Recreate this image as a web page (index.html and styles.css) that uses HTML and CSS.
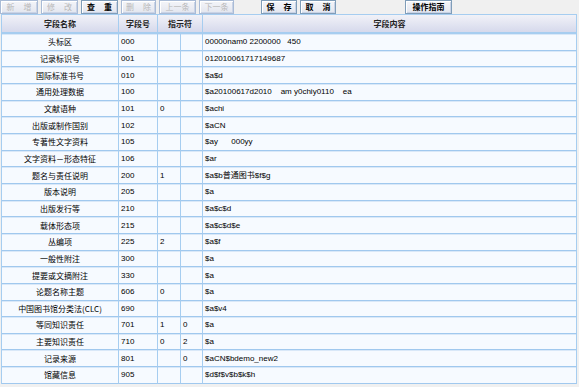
FILE: index.html
```
<!DOCTYPE html>
<html>
<head>
<meta charset="utf-8">
<link rel="stylesheet" href="styles.css">
</head>
<body>
<div class="toolbar">
  <div class="group">
    <button class="btn off sp w38">新 增</button>
    <button class="btn off sp w37">修 改</button>
    <button class="btn on sp w37">查 重</button>
    <button class="btn off sp w35">删 除</button>
    <button class="btn off w37">上一条</button>
    <button class="btn off w35">下一条</button>
  </div>
  <div class="group g2">
    <button class="btn on sp w36">保 存</button>
    <button class="btn on sp w36">取 消</button>
  </div>
  <div class="group g3">
    <button class="btn on w47">操作指南</button>
  </div>
</div>
<table class="grid">
  <colgroup>
    <col class="c1"><col class="c2"><col class="c3"><col class="c4"><col>
  </colgroup>
  <thead>
    <tr><th>字段名称</th><th>字段号</th><th colspan="2">指示符</th><th>字段内容</th></tr>
  </thead>
  <tbody>
    <tr><td class="name">头标区</td><td>000</td><td></td><td></td><td>00000nam0 2200000   450</td></tr>
    <tr><td class="name">记录标识号</td><td>001</td><td></td><td></td><td>012010061717149687</td></tr>
    <tr><td class="name">国际标准书号</td><td>010</td><td></td><td></td><td>$a$d</td></tr>
    <tr><td class="name">通用处理数据</td><td>100</td><td></td><td></td><td>$a20100617d2010    am y0chiy0110    ea</td></tr>
    <tr><td class="name">文献语种</td><td>101</td><td>0</td><td></td><td>$achi</td></tr>
    <tr><td class="name">出版或制作国别</td><td>102</td><td></td><td></td><td>$aCN</td></tr>
    <tr><td class="name">专著性文字资料</td><td>105</td><td></td><td></td><td>$ay      000yy</td></tr>
    <tr><td class="name">文字资料－形态特征</td><td>106</td><td></td><td></td><td>$ar</td></tr>
    <tr><td class="name">题名与责任说明</td><td>200</td><td>1</td><td></td><td>$a$b普通图书$f$g</td></tr>
    <tr><td class="name">版本说明</td><td>205</td><td></td><td></td><td>$a</td></tr>
    <tr><td class="name">出版发行等</td><td>210</td><td></td><td></td><td>$a$c$d</td></tr>
    <tr><td class="name">载体形态项</td><td>215</td><td></td><td></td><td>$a$c$d$e</td></tr>
    <tr><td class="name">丛编项</td><td>225</td><td>2</td><td></td><td>$a$f</td></tr>
    <tr><td class="name">一般性附注</td><td>300</td><td></td><td></td><td>$a</td></tr>
    <tr><td class="name">提要或文摘附注</td><td>330</td><td></td><td></td><td>$a</td></tr>
    <tr><td class="name">论题名称主题</td><td>606</td><td>0</td><td></td><td>$a</td></tr>
    <tr><td class="name">中国图书馆分类法(CLC)</td><td>690</td><td></td><td></td><td>$a$v4</td></tr>
    <tr><td class="name">等同知识责任</td><td>701</td><td>1</td><td>0</td><td>$a</td></tr>
    <tr><td class="name">主要知识责任</td><td>710</td><td>0</td><td>2</td><td>$a</td></tr>
    <tr><td class="name">记录来源</td><td>801</td><td></td><td>0</td><td>$aCN$bdemo_new2</td></tr>
    <tr><td class="name">馆藏信息</td><td>905</td><td></td><td></td><td>$d$f$v$b$k$h</td></tr>
  </tbody>
</table>
</body>
</html>
```
FILE: styles.css
```
html, body {
  margin: 0;
  padding: 0;
  background: #f0f0f0;
  font-family: "Liberation Sans", "Noto Sans CJK SC", sans-serif;
  font-size: 8px;
  color: #000;
  width: 579px;
  height: 387px;
  overflow: hidden;
}
.toolbar {
  display: flex;
  height: 14px;
  align-items: flex-start;
}
.group {
  display: flex;
  gap: 3px;
}
.g2 { margin-left: 27px; }
.g3 { margin-left: 69px; }
.btn {
  height: 14px;
  margin: 0;
  padding: 0;
  box-sizing: border-box;
  border: 1px solid #7f9db9;
  box-shadow: inset 1px 1px 0 #ffffff, inset -1px -1px 0 #c9d3e6;
  background: linear-gradient(#f4f5f9, #e3e6ef);
  font-family: "Noto Sans CJK SC", sans-serif;
  font-size: 8px;
  line-height: 12px;
  color: #000;
  font-weight: bold;
  white-space: nowrap;
}
.btn.sp {
  word-spacing: 7px;
}
.btn.off {
  color: #b8b8b8;
  font-weight: normal;
  border-color: #a9bbd6;
}
.w38 { width: 38px; }
.w37 { width: 37px; }
.w36 { width: 36px; }
.w35 { width: 35px; }
.w47 { width: 47px; }

.grid {
  margin-left: 1px;
  width: 576px;
  table-layout: fixed;
  border-collapse: separate;
  border-spacing: 0;
  border-left: 1px solid #a6cdf0;
  border-top: 1px solid #a6cdf0;
}
.c1 { width: 117px; }
.c2 { width: 39px; }
.c3 { width: 23px; }
.c4 { width: 22px; }
.grid th {
  height: 17px;
  padding: 0;
  background: linear-gradient(#f1f2f8, #d6d9ec);
  border-right: 1px solid #a6cdf0;
  border-bottom: 2px solid #a6cdf0;
  font-family: "Noto Sans CJK SC", sans-serif;
  font-weight: bold;
  font-size: 8px;
  color: #222;
  text-align: center;
}
.grid td {
  height: 15.667px;
  padding: 0 0 0 2px;
  background: #f6faff;
  border-right: 1px solid #a6cdf0;
  border-bottom: 1px solid #a0c8ee;
  box-shadow: inset 0 1px 0 #d9e8f8;
  white-space: pre;
  overflow: hidden;
  text-align: left;
  line-height: 15px;
}
.grid td.name {
  text-align: center;
  padding: 0;
  font-family: "Noto Sans CJK SC", sans-serif;
}
```
